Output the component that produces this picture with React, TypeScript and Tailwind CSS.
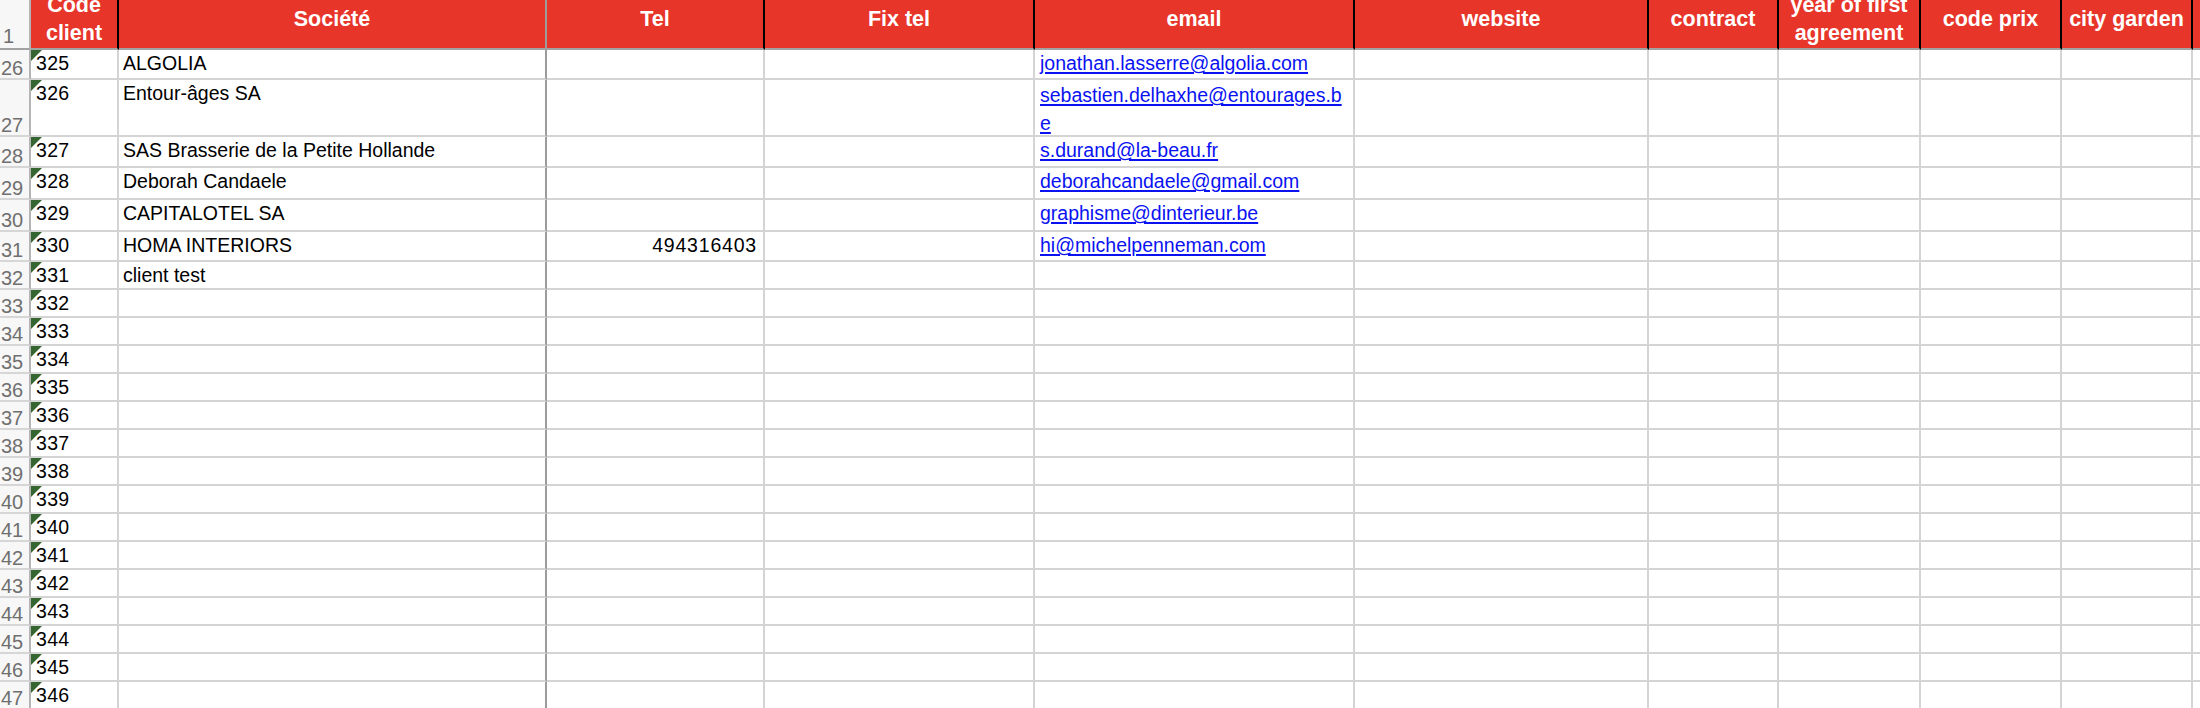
import React from 'react';

const cols = 'grid grid-cols-[31px_88px_428px_218px_270px_320px_294px_130px_142px_141px_131px_7px]';

interface ClientRow {
  num: number;
  code: string;
  societe?: string;
  tel?: string;
  email?: string[];
  h: string;
}

const rows: ClientRow[] = [
  { num: 26, code: '325', societe: 'ALGOLIA', email: ['jonathan.lasserre@algolia.com'], h: 'h-[30px]' },
  { num: 27, code: '326', societe: 'Entour-âges SA', email: ['sebastien.delhaxhe@entourages.b', 'e'], h: 'h-[57px]' },
  { num: 28, code: '327', societe: 'SAS Brasserie de la Petite Hollande', email: ['s.durand@la-beau.fr'], h: 'h-[31px]' },
  { num: 29, code: '328', societe: 'Deborah Candaele', email: ['deborahcandaele@gmail.com'], h: 'h-[32px]' },
  { num: 30, code: '329', societe: 'CAPITALOTEL SA', email: ['graphisme@dinterieur.be'], h: 'h-[32px]' },
  { num: 31, code: '330', societe: 'HOMA INTERIORS', tel: '494316403', email: ['hi@michelpenneman.com'], h: 'h-[30px]' },
  { num: 32, code: '331', societe: 'client test', h: 'h-[28px]' },
];

// empty rows 33 -> 47, codes 332 -> 346
for (let n = 33; n <= 47; n++) {
  rows.push({ num: n, code: String(n + 299), h: 'h-[28px]' });
}

const headers = [
  { label: 'Code client', line: 'border-r-black' },
  { label: 'Société', line: 'border-r-[#9c9c9c]' },
  { label: 'Tel', line: 'border-r-black' },
  { label: 'Fix tel', line: 'border-r-black' },
  { label: 'email', line: 'border-r-black' },
  { label: 'website', line: 'border-r-black' },
  { label: 'contract', line: 'border-r-black' },
  { label: 'year of first agreement', line: 'border-r-black' },
  { label: 'code prix', line: 'border-r-black' },
  { label: 'city garden', line: 'border-r-black' },
];

const cell = 'border-r-2 border-b-2 border-[#d4d4d4] px-[4px] pt-[1px] leading-[25px] overflow-hidden whitespace-nowrap';

const RowNumber: React.FC<{ n: number | string; h: string }> = ({ n, h }) => (
  <div className={`${h} flex items-end bg-[#f7f7f7] border-r-2 border-r-[#b4b4b4] border-b-2 border-b-[#d6d6d6] pl-[1px] text-[20px] leading-[20px] text-[#6f6f6f]`}>
    {n}
  </div>
);

const Spreadsheet: React.FC = () => {
  return (
    <div className="w-[2200px] h-[708px] overflow-hidden bg-white font-['Liberation_Sans',Arial,sans-serif] text-[19.5px] text-black">
      {/* Header row */}
      <div className={cols}>
        <div className="h-[50px] flex items-end bg-[#f7f7f7] border-r-2 border-r-[#b4b4b4] border-b-2 border-b-[#a2a2a2] pl-[3px] pb-[2px] text-[20px] leading-[20px] text-[#6f6f6f]">
          1
        </div>
        {headers.map((hd) => (
          <div key={hd.label} className={`h-[50px] bg-[#e8352a] border-r-2 ${hd.line} border-b-2 border-b-[#a2a2a2]`}>
            <div className="h-[37px] flex items-center justify-center px-[3px] text-center text-white font-bold text-[21.5px] leading-[28px]">
              {hd.label}
            </div>
          </div>
        ))}
        <div className="h-[50px] bg-[#e8352a] border-b-2 border-b-[#a2a2a2]" />
      </div>

      {/* Body rows */}
      {rows.map((r) => {
        const multi = r.email && r.email.length > 1;
        return (
          <div key={r.num} className={cols}>
            <RowNumber n={r.num} h={r.h} />
            <div className={`${r.h} ${cell} relative pl-[5px] tracking-[0.3px]`}>
              <svg className="absolute left-0 top-0" width="11" height="11" viewBox="0 0 11 11">
                <polygon points="0,0 11,0 0,11" fill="#356631" />
              </svg>
              {r.code}
            </div>
            <div className={`${r.h} ${cell} border-r-[#9c9c9c]`}>{r.societe}</div>
            <div className={`${r.h} ${cell} text-right pr-[6px] tracking-[0.8px]`}>{r.tel}</div>
            <div className={`${r.h} ${cell}`} />
            <div className={`${r.h} ${cell} pl-[5px] ${multi ? 'leading-[28px] pt-0' : ''}`}>
              {r.email && (
                <span className="text-[#0a12f2] underline decoration-[1.5px] underline-offset-[2px]">
                  {r.email.map((line, i) => (
                    <React.Fragment key={i}>
                      {i > 0 && <br />}
                      {line}
                    </React.Fragment>
                  ))}
                </span>
              )}
            </div>
            <div className={`${r.h} ${cell}`} />
            <div className={`${r.h} ${cell}`} />
            <div className={`${r.h} ${cell}`} />
            <div className={`${r.h} ${cell}`} />
            <div className={`${r.h} ${cell}`} />
            <div className={`${r.h} border-b-2 border-[#d4d4d4]`} />
          </div>
        );
      })}
    </div>
  );
};

export default function App() {
  return <Spreadsheet />;
}
